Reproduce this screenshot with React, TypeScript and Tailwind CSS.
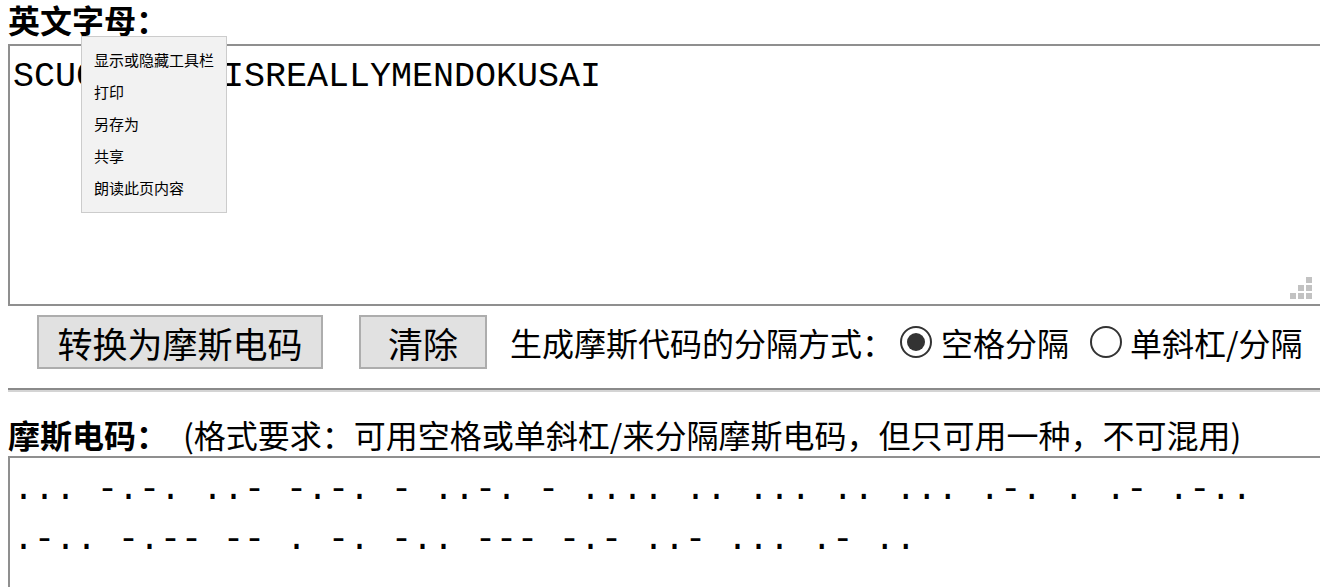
const morse =
  "... -.-. ..- -.-. - ..-. - .... .. ... .. ... .-. . .- .-.. .-.. -.-- -- . -. -.. --- -.- ..- ... .- ..";

const menuItems = ["显示或隐藏工具栏", "打印", "另存为", "共享", "朗读此页内容"];

const Radio = ({ checked }: { checked?: boolean }) => (
  <span className="flex h-[32px] w-[32px] shrink-0 items-center justify-center rounded-full border-2 border-[#333333] bg-white">
    {checked && <span className="h-[18px] w-[18px] rounded-full bg-[#333333]" />}
  </span>
);

const Grip = () => (
  <div className="pointer-events-none absolute left-[1282px] top-[233px] grid grid-cols-3 gap-[2px]">
    {[0, 0, 1, 0, 1, 1, 1, 1, 1].map((on, i) => (
      <span key={i} className={on ? "h-[6px] w-[6px] bg-[#c2c2c2]" : "h-[6px] w-[6px]"} />
    ))}
  </div>
);

export default function App() {
  return (
    <div className="h-[587px] w-[1320px] overflow-hidden bg-white px-[8px] font-['Noto_Sans_CJK_SC',sans-serif] text-black">
      {/* 英文字母 */}
      <div className="text-[32px] font-bold leading-[38px]">英文字母：</div>
      <div className="relative mt-[6px]">
        <textarea
          defaultValue="SCUCTFTHISISREALLYMENDOKUSAI"
          spellCheck={false}
          className="block h-[262px] w-[1316px] resize-none overflow-hidden border-2 border-[#8f8f8f] px-[3px] pt-[6px] font-['Liberation_Mono',monospace] text-[35px] leading-[50px] text-black outline-none"
        />
        <Grip />

        {/* context menu */}
        <div className="absolute left-[73px] top-[-8px] w-[146px] border border-[#cccccc] bg-[#f2f2f2] pb-[8px] pt-[7px] font-['Noto_Sans_CJK_SC',sans-serif] text-[15px] text-black">
          {menuItems.map((item) => (
            <div key={item} className="flex h-[32px] items-center pl-[12px]">
              {item}
            </div>
          ))}
        </div>
      </div>

      {/* buttons & options */}
      <div className="mt-[9px] flex h-[54px] items-center">
        <button className="ml-[29px] flex h-[54px] w-[286px] items-center justify-center border-2 border-[#adadad] bg-[#e1e1e1] text-[35px] leading-none">
          转换为摩斯电码
        </button>
        <button className="ml-[36px] flex h-[54px] w-[128px] items-center justify-center border-2 border-[#adadad] bg-[#e1e1e1] text-[35px] leading-none">
          清除
        </button>
        <span className="ml-[23px] text-[32px] leading-[40px]">生成摩斯代码的分隔方式：</span>
        <span className="ml-[6px]">
          <Radio checked />
        </span>
        <span className="ml-[9px] text-[32px] leading-[40px]">空格分隔</span>
        <span className="ml-[21px]">
          <Radio />
        </span>
        <span className="ml-[8px] whitespace-nowrap text-[32px] leading-[40px]">单斜杠/分隔</span>
      </div>

      <div className="mt-[19px] h-[4px] w-[1320px] border-b-2 border-t-2 border-b-[#d4d4d4] border-t-[#8a8a8a]" />

      {/* 摩斯电码 */}
      <div className="mt-[22px] flex text-[32px] leading-[40px]">
        <span className="font-bold">摩斯电码：</span>
        <span className="ml-[15px]">(格式要求：可用空格或单斜杠/来分隔摩斯电码，但只可用一种，不可混用)</span>
      </div>
      <textarea
        defaultValue={morse}
        spellCheck={false}
        className="mt-[2px] block h-[262px] w-[1316px] resize-none overflow-hidden border-2 border-[#8f8f8f] px-[3px] pt-[7px] font-['Liberation_Mono',monospace] text-[35px] leading-[50px] text-black outline-none"
      />
    </div>
  );
}
